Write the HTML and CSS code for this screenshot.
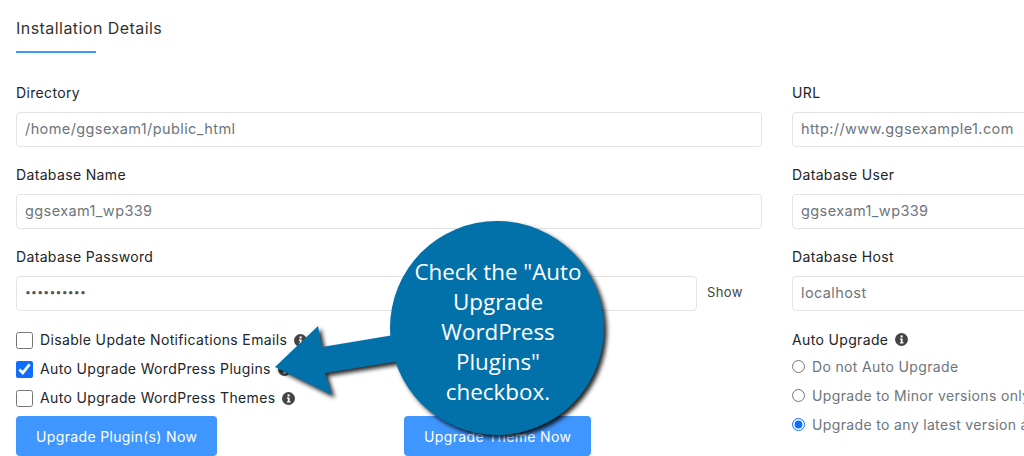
FILE: index.html
```html
<!DOCTYPE html>
<html lang="en">
<head>
    <meta charset="UTF-8">
    <meta name="viewport" content="width=device-width, initial-scale=1.0">
    <title>Installation Details</title>
    <link rel="stylesheet" href="styles.css">
</head>
<body>
    <div class="page">
        <h2 class="title">Installation Details</h2>

        <div class="columns">
            <div class="col">
                <div class="field">
                    <label>Directory</label>
                    <input type="text" value="/home/ggsexam1/public_html">
                </div>
                <div class="field">
                    <label>Database Name</label>
                    <input type="text" value="ggsexam1_wp339">
                </div>
                <div class="field">
                    <label>Database Password</label>
                    <div class="pass-row">
                        <input type="password" value="ggsexam1pw">
                        <span class="show">Show</span>
                    </div>
                </div>

                <div class="checks">
                    <label class="check">
                        <input type="checkbox">
                        <span>Disable Update Notifications Emails</span>
                        <svg class="info" viewBox="0 0 14 14"><circle cx="7" cy="7" r="7"/><rect x="6" y="2.6" width="2.2" height="2.2" fill="#fff"/><path d="M5.3 6h2.9v4h1v1.4H5.3V10h1V7.4h-1z" fill="#fff"/></svg>
                    </label>
                    <label class="check">
                        <input type="checkbox" checked>
                        <span>Auto Upgrade WordPress Plugins</span>
                        <svg class="info" viewBox="0 0 14 14"><circle cx="7" cy="7" r="7"/><rect x="6" y="2.6" width="2.2" height="2.2" fill="#fff"/><path d="M5.3 6h2.9v4h1v1.4H5.3V10h1V7.4h-1z" fill="#fff"/></svg>
                    </label>
                    <label class="check">
                        <input type="checkbox">
                        <span>Auto Upgrade WordPress Themes</span>
                        <svg class="info" viewBox="0 0 14 14"><circle cx="7" cy="7" r="7"/><rect x="6" y="2.6" width="2.2" height="2.2" fill="#fff"/><path d="M5.3 6h2.9v4h1v1.4H5.3V10h1V7.4h-1z" fill="#fff"/></svg>
                    </label>
                </div>

                <div class="buttons">
                    <div><button class="btn">Upgrade Plugin(s) Now</button></div>
                    <div><button class="btn">Upgrade Theme Now</button></div>
                </div>
            </div>

            <div class="col">
                <div class="field">
                    <label>URL</label>
                    <input type="text" value="http://www.ggsexample1.com">
                </div>
                <div class="field">
                    <label>Database User</label>
                    <input type="text" value="ggsexam1_wp339">
                </div>
                <div class="field">
                    <label>Database Host</label>
                    <input type="text" value="localhost">
                </div>

                <div class="upgrade-head">
                    <span>Auto Upgrade</span>
                    <svg class="info" viewBox="0 0 14 14"><circle cx="7" cy="7" r="7"/><rect x="6" y="2.6" width="2.2" height="2.2" fill="#fff"/><path d="M5.3 6h2.9v4h1v1.4H5.3V10h1V7.4h-1z" fill="#fff"/></svg>
                </div>
                <label class="radio"><input type="radio" name="auto"><span>Do not Auto Upgrade</span></label>
                <label class="radio"><input type="radio" name="auto"><span>Upgrade to Minor versions only</span></label>
                <label class="radio"><input type="radio" name="auto" checked><span>Upgrade to any latest version available</span></label>
            </div>
        </div>
    </div>

    <!-- callout sits over the form -->
    <svg class="callout-shape" width="1024" height="456" viewBox="0 0 1024 456">
        <path d="M275 367 L318 326 L322 347 L400 334 L400 361 L325 373 L332 395 Z" fill="#0271aa"/>
        <circle cx="497" cy="328" r="107" fill="#0271aa"/>
    </svg>
    <div class="callout-text">Check the "Auto<br>Upgrade<br>WordPress<br>Plugins"<br>checkbox.</div>
</body>
</html>
```

FILE: styles.css
```css
* {
    box-sizing: border-box;
}

html, body {
    margin: 0;
    height: 456px;
    overflow: hidden;
    background: #fff;
}

body {
    font-family: "Inter", "Liberation Sans", sans-serif;
    font-size: 14px;
    letter-spacing: 0.35px;
    color: #212529;
}

.page {
    padding: 16px 0 0 16px;
    width: 1600px;
}

.title {
    margin: 0 0 30px;
    font-size: 16px;
    font-weight: 400;
    letter-spacing: 0.45px;
    line-height: 24px;
    color: #333;
}

.title::after {
    content: "";
    display: block;
    width: 80px;
    height: 2px;
    margin-top: 11px;
    background: #4096ff;
}

.columns {
    display: flex;
    gap: 30px;
}

.col {
    width: 746px;
    flex: none;
}

.field {
    margin-bottom: 18px;
}

.field label {
    display: block;
    line-height: 20px;
    margin-bottom: 9px;
}

.field input {
    display: block;
    width: 100%;
    height: 35px;
    padding: 0 8px 2px;
    border: 1px solid #e3e3e3;
    border-radius: 4px;
    font: inherit;
    font-size: 14.5px;
    letter-spacing: 0.4px;
    color: #6c757d;
    outline: none;
}

.pass-row {
    display: flex;
    align-items: center;
}

.pass-row input {
    width: 681px;
    flex: none;
    font-size: 10.5px;
    letter-spacing: 0.2px;
    color: #555;
}

.show {
    margin-left: 10px;
    margin-bottom: 4px;
    font-size: 13px;
    color: #444;
}

.checks {
    margin-top: -3px;
}

.check {
    display: flex;
    align-items: center;
    height: 29px;
}

.check span {
    padding-bottom: 2px;
}

.check input {
    width: 17px;
    height: 17px;
    margin: 0 7px 0 0;
    accent-color: #0d6efd;
}

.info {
    width: 13px;
    height: 13px;
    margin-left: 7px;
    fill: #444;
}

.buttons {
    display: grid;
    grid-template-columns: 1fr 1fr;
    gap: 30px;
    margin-top: 3px;
}

.btn {
    height: 40px;
    padding: 0 20px;
    border: 0;
    border-radius: 4px;
    background: #4096ff;
    color: #fff;
    font: inherit;
    letter-spacing: 0.35px;
}

.upgrade-head {
    display: flex;
    align-items: center;
    height: 20px;
    margin-bottom: 3px;
}

.radio {
    display: flex;
    align-items: center;
    height: 29px;
    color: #6c757d;
}

.radio input {
    width: 13px;
    height: 13px;
    margin: 0 7px 0 0;
    accent-color: #0d6efd;
}

.callout-shape {
    position: absolute;
    left: 0;
    top: 0;
    filter: drop-shadow(3px 3px 2px rgba(0, 0, 0, 0.85));
}

.callout-text {
    position: absolute;
    left: 398px;
    top: 257px;
    width: 200px;
    text-align: center;
    font-family: "Open Sans", sans-serif;
    font-size: 22.4px;
    letter-spacing: 0;
    line-height: 30px;
    color: #fff;
}
```
